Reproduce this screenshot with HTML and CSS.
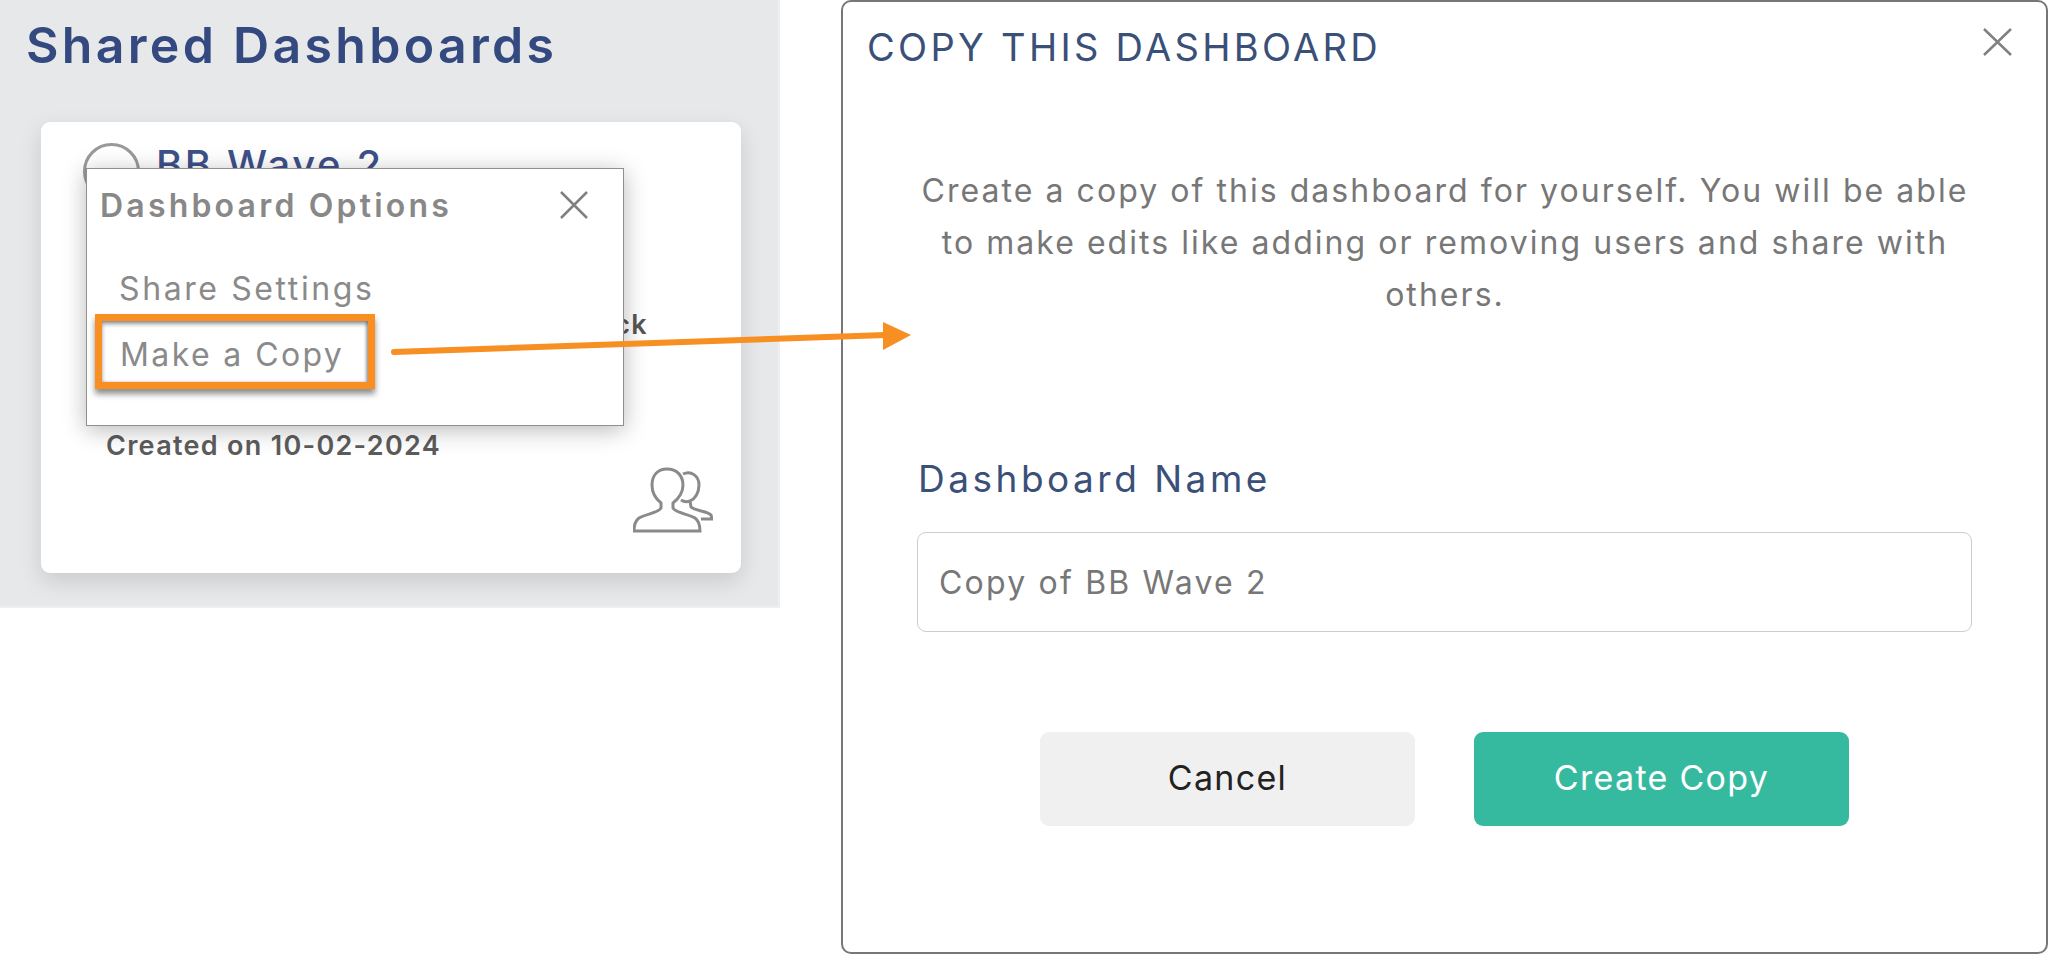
FILE: index.html
```html
<!DOCTYPE html>
<html lang="en">
<head>
    <meta charset="UTF-8">
    <title>Copy this dashboard</title>
    <link rel="stylesheet" href="styles.css">
</head>
<body>

<div class="stage">
    <section class="panel">
        <h1 class="panel-title">Shared Dashboards</h1>
        <div class="card">
            <div class="card-head">
                <span class="avatar"></span>
                <h2 class="card-title">BB Wave 2</h2>
            </div>
            <p class="card-owner">Shared by Jack</p>
            <p class="card-date">Created on 10-02-2024</p>
            <svg class="users-icon" width="80" height="66" viewBox="0 0 80 66">
                <path d="M34 2C24 2 19 9 19 18C19 26 23 32 28 36L28 41C26 46 12 47 6 51C2 54 1 58 1 64L67 64C67 58 66 54 62 51C56 47 42 46 40 41L40 36C45 32 50 26 50 18C50 9 44 2 34 2Z"/>
                <path d="M50 7C58 3 66 9 66 18C66 26 62 32 57 34C54 35 51 35 48 33M57 34L58 40C62 44 75 44 78 48L79 52L68 52"/>
            </svg>

            <div class="options">
                <div class="options-head">
                    <span class="options-title">Dashboard Options</span>
                    <svg class="close-icon" width="28" height="28" viewBox="0 0 28 28">
                        <path d="M1 1L27 27M27 1L1 27"/>
                    </svg>
                </div>
                <div class="options-item">Share Settings</div>
                <div class="options-item highlighted">Make a Copy</div>
            </div>
        </div>
    </section>

    <section class="modal">
        <div class="modal-head">
            <h2 class="modal-title">COPY THIS DASHBOARD</h2>
            <svg class="close-icon modal-close" width="29" height="28" viewBox="0 0 29 28">
                <path d="M1 1L28 27M28 1L1 27"/>
            </svg>
        </div>
        <p class="modal-text">Create a copy of this dashboard for yourself. You will be able to make edits like adding or removing users and share with others.</p>
        <label class="field-label" for="dashboard_name">Dashboard Name</label>
        <input class="field-input" id="dashboard_name" type="text" value="Copy of BB Wave 2">
        <div class="modal-actions">
            <button class="btn btn-cancel">Cancel</button>
            <button class="btn btn-create">Create Copy</button>
        </div>
    </section>
</div>

<svg class="arrow" width="530" height="40" viewBox="0 0 530 40">
    <path class="arrow-line" d="M3 32L495 15"/>
    <path class="arrow-head" d="M492 2L520 15L492 30Z"/>
</svg>

</body>
</html>
```

FILE: styles.css
```css
* {
    box-sizing: border-box;
}

body {
    margin: 0;
    background: white;
    font-family: 'Inter', 'Liberation Sans', sans-serif;
    overflow: hidden;
}

.stage {
    display: flex;
    align-items: flex-start;
    height: 955px;
}

.panel {
    width: 780px;
    height: 608px;
    flex-shrink: 0;
    padding: 16px 0 0 41px;
    background: #e7e8ea;
    border-right: 2px solid #eeeff0;
    border-bottom: 2px solid #eeeff0;
}

.panel-title {
    margin: 0 0 48px -15px;
    height: 58px;
    font-size: 50px;
    line-height: 58px;
    font-weight: 600;
    letter-spacing: 3.3px;
    color: #34497f;
}

.card {
    position: relative;
    display: flex;
    flex-direction: column;
    width: 700px;
    height: 451px;
    padding: 21px 0 0 42px;
    background: white;
    border-radius: 9px;
    box-shadow: 0 8px 22px rgba(0, 0, 0, 0.13);
}

.card-head {
    display: flex;
    gap: 16px;
}

.avatar {
    width: 57px;
    height: 57px;
    border: 3px solid #999;
    border-radius: 50%;
}

.card-title {
    margin: 0;
    font-size: 40px;
    line-height: 44px;
    font-weight: 500;
    letter-spacing: 2.6px;
    color: #3d5088;
}

.card-owner {
    margin: 107px 93px 0 0;
    text-align: right;
    font-size: 27px;
    line-height: 36px;
    font-weight: 600;
    letter-spacing: 1.3px;
    color: #555;
}

.card-date {
    margin: 85px 0 0 23px;
    font-size: 27px;
    line-height: 36px;
    font-weight: 600;
    letter-spacing: 1.3px;
    color: #5c5c5c;
}

.users-icon {
    align-self: flex-end;
    margin: 3px 28px 0 0;
    fill: none;
    stroke: #8a8a8a;
    stroke-width: 3;
}

.options {
    position: absolute;
    left: 45px;
    top: 46px;
    width: 538px;
    height: 258px;
    padding-top: 16px;
    background: white;
    border: 1px solid #8f8f8f;
    box-shadow: 0 4px 22px rgba(0, 0, 0, 0.28);
}

.options-head {
    display: flex;
    justify-content: space-between;
    align-items: center;
    height: 40px;
    padding: 0 35px 0 13px;
}

.options-title {
    font-size: 32px;
    font-weight: 600;
    letter-spacing: 3.2px;
    color: #888;
}

.close-icon {
    fill: none;
    stroke: #808080;
    stroke-width: 2.5;
}

.options-item {
    height: 40px;
    margin-top: 44px;
    padding-left: 32px;
    font-size: 32px;
    line-height: 40px;
    letter-spacing: 2.6px;
    color: #8a8a8a;
}

.options-item.highlighted {
    width: 280px;
    height: 75px;
    margin: 5px 0 0 8px;
    padding: 14px 0 0 18px;
    letter-spacing: 2.4px;
    border: 7px solid #f78f22;
    box-shadow: 0 5px 6px rgba(0, 0, 0, 0.45), inset 0 3px 4px rgba(0, 0, 0, 0.4), inset -2px 0 3px rgba(0, 0, 0, 0.25);
}

.modal {
    display: flex;
    flex-direction: column;
    width: 1207px;
    height: 954px;
    margin-left: 61px;
    padding: 22px 0 0 24px;
    background: white;
    border: 2px solid #777;
    border-radius: 10px;
}

.modal-head {
    display: flex;
    justify-content: space-between;
    height: 46px;
    padding-right: 34px;
}

.modal-title {
    margin: 0;
    font-size: 38px;
    line-height: 46px;
    font-weight: 400;
    letter-spacing: 3.3px;
    color: #3a5078;
}

.modal-close {
    margin-top: 4px;
}

.modal-text {
    width: 1080px;
    margin: 95px 0 0 38px;
    text-align: center;
    font-size: 32px;
    line-height: 52px;
    font-weight: 400;
    letter-spacing: 2.05px;
    color: #777;
}

.field-label {
    margin: 136px 0 0 51px;
    font-size: 37px;
    line-height: 44px;
    letter-spacing: 3.5px;
    color: #3a5078;
}

.field-input {
    width: 1055px;
    height: 100px;
    margin: 31px 0 0 50px;
    padding: 0 0 0 21px;
    font-family: 'Inter', 'Liberation Sans', sans-serif;
    font-size: 32px;
    letter-spacing: 2.2px;
    color: #777;
    background: white;
    border: 1.5px solid #ccc;
    border-radius: 9px;
    outline: none;
}

.modal-actions {
    display: flex;
    justify-content: center;
    gap: 59px;
    margin-top: 100px;
    padding-right: 24px;
}

.btn {
    width: 375px;
    height: 94px;
    padding-bottom: 5px;
    font-family: 'Inter', 'Liberation Sans', sans-serif;
    font-size: 34px;
    letter-spacing: 1.3px;
    border: none;
    border-radius: 9px;
}

.btn-cancel {
    background: #f0f0f0;
    color: #222;
}

.btn-create {
    background: #36ba9f;
    color: white;
}

/* annotation drawn over both shots */
.arrow {
    position: absolute;
    left: 391px;
    top: 320px;
}

.arrow-line {
    fill: none;
    stroke: #f78f22;
    stroke-width: 6;
    stroke-linecap: round;
}

.arrow-head {
    fill: #f78f22;
}
```
